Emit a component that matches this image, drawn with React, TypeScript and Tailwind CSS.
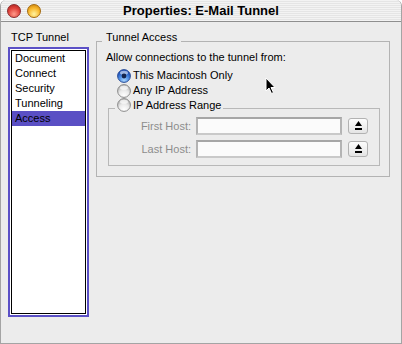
import React from "react";

const listItems = ["Document", "Connect", "Security", "Tunneling", "Access"];

function Radio({ on, id }: { on?: boolean; id: string }) {
  return (
    <svg width="14" height="14" viewBox="0 0 14 14" className="shrink-0">
      <defs>
        <radialGradient id={`g-${id}`} cx="50%" cy="85%" r="70%">
          {on ? (
            <>
              <stop offset="0%" stopColor="#a9d4fb" />
              <stop offset="55%" stopColor="#4b8de6" />
              <stop offset="100%" stopColor="#1e4fb8" />
            </>
          ) : (
            <>
              <stop offset="0%" stopColor="#ffffff" />
              <stop offset="60%" stopColor="#e9e9e9" />
              <stop offset="100%" stopColor="#bdbdbd" />
            </>
          )}
        </radialGradient>
      </defs>
      <circle cx="7" cy="7" r="6.4" fill={`url(#g-${id})`} stroke={on ? "#2d4f96" : "#8c8c8c"} strokeWidth="1" />
      <ellipse cx="7" cy="3.8" rx="4" ry="2" fill="#ffffff" opacity={on ? 0.55 : 0.7} />
      {on && <circle cx="7" cy="7" r="2.4" fill="#15244d" />}
    </svg>
  );
}

function EjectButton() {
  return (
    <button className="w-[20px] h-[16px] rounded-[3px] border border-[#b2b2b2] bg-[linear-gradient(to_bottom,#fdfdfd,#e4e4e4)] flex flex-col items-center justify-center gap-[2px]">
      <svg width="7" height="10" viewBox="0 0 7 10">
        <polygon points="3.5,0 7,5 0,5" fill="#000" />
        <rect x="0" y="7" width="7" height="2" fill="#000" />
      </svg>
    </button>
  );
}

function HostRow({ label }: { label: string }) {
  return (
    <div className="flex items-center">
      <span className="w-[82px] text-right text-[#8c8c8c]">{label}</span>
      <div className="ml-[5px] w-[146px] h-[18px] bg-[#fbfbfb] border-2 border-[#b4b4b4] border-t-[#a6a6a6] border-b-[#c9c9c9]" />
      <div className="ml-[6px]">
        <EjectButton />
      </div>
    </div>
  );
}

export default function App() {
  return (
    <div className="w-[402px] h-[344px] bg-white font-['Liberation_Sans',Arial,sans-serif] text-[11px] leading-[13px] text-black">
      <div className="relative w-full h-full flex flex-col rounded-t-[6px] overflow-hidden border-x border-b border-[#a4a4a4] bg-[#ececec]">
        {/* title bar */}
        <div className="h-[22px] shrink-0 flex items-center border-b border-[#8f8f8f] bg-[repeating-linear-gradient(to_bottom,#f3f3f3_0px,#f3f3f3_1px,#e5e5e5_1px,#e5e5e5_2px)]">
          <div className="flex items-center gap-[6px] pl-[6px]">
            <span className="w-[14px] h-[14px] rounded-full border border-[#8a2b2b] bg-[radial-gradient(circle_at_50%_75%,#ff9a8a,#e0423a_55%,#a8201c)]" />
            <span className="w-[14px] h-[14px] rounded-full border border-[#a46a0f] bg-[radial-gradient(circle_at_50%_75%,#fff3a0,#f8b72a_55%,#c37a0a)]" />
          </div>
          <div className="flex-1 text-center pr-[40px] font-bold text-[13px] leading-[16px]">Properties: E-Mail Tunnel</div>
        </div>

        {/* body */}
        <div className="flex pl-[7px] pt-[9px]">
          <div className="w-[81px] flex flex-col">
            <div className="pl-[3px] h-[13px]">TCP Tunnel</div>
            <div className="mt-[3px] h-[270px] border-2 border-[#5b50c6] bg-white p-px">
              <div className="h-full border border-black bg-white">
                {listItems.map((it) => (
                  <div
                    key={it}
                    className={`h-[15px] leading-[15px] pl-[3px] ${it === "Access" ? "bg-[#5a4fc4] text-black" : ""}`}
                  >
                    {it}
                  </div>
                ))}
              </div>
            </div>
          </div>

          <fieldset className="ml-[7px] w-[294px] self-start border border-[#b3b3b3] pl-[9px] pb-[10px]">
            <legend className="ml-[-4px] px-[4px] pb-[8px] leading-[13px]">Tunnel Access</legend>
            <div className="-mt-px leading-[13px]">Allow connections to the tunnel from:</div>
            <div className="mt-[4px] ml-[11px] flex flex-col">
              <label className="h-[15px] flex items-center gap-[2px]">
                <Radio on id="r1" />
                <span>This Macintosh Only</span>
              </label>
              <label className="h-[15px] flex items-center gap-[2px]">
                <Radio id="r2" />
                <span>Any IP Address</span>
              </label>
            </div>
            <fieldset className="ml-[2px] w-[272px] border border-[#b8b8b8] pl-[6px] pb-[7px]">
              <legend className="px-[2px] pb-[6px]">
                <span className="flex items-center gap-[2px]">
                  <Radio id="r3" />
                  <span>IP Address Range</span>
                </span>
              </legend>
              <div className="-mt-px -ml-[6px] flex flex-col gap-[5px]">
                <HostRow label="First Host:" />
                <HostRow label="Last Host:" />
              </div>
            </fieldset>
          </fieldset>
        </div>

        {/* mouse pointer */}
        <svg className="absolute left-[264px] top-[77px]" width="12" height="18" viewBox="0 0 12 18">
          <path d="M1 1 L1 14 L4 11 L6.5 16.5 L8.5 15.5 L6 10.5 L10 10.5 Z" fill="#000" stroke="#fff" strokeWidth="1" />
        </svg>
      </div>
    </div>
  );
}
